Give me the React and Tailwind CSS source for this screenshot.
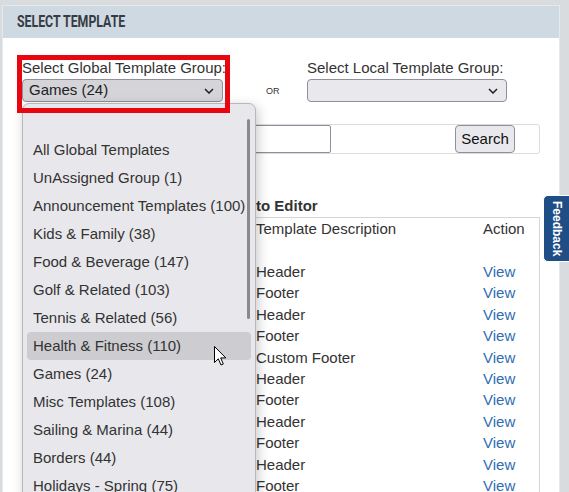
import React from "react";

const items = [
  "",
  "All Global Templates",
  "UnAssigned Group (1)",
  "Announcement Templates (100)",
  "Kids & Family (38)",
  "Food & Beverage (147)",
  "Golf & Related (103)",
  "Tennis & Related (56)",
  "Health & Fitness (110)",
  "Games (24)",
  "Misc Templates (108)",
  "Sailing & Marina (44)",
  "Borders (44)",
  "Holidays - Spring (75)",
];

const rows = [
  "Header",
  "Footer",
  "Header",
  "Footer",
  "Custom Footer",
  "Header",
  "Footer",
  "Header",
  "Footer",
  "Header",
  "Footer",
];

function Chevron() {
  return (
    <svg width="10" height="6" viewBox="0 0 10 6" className="shrink-0">
      <path d="M1 1 L5 5 L9 1" fill="none" stroke="#1f1f1f" strokeWidth="1.5" />
    </svg>
  );
}

export default function App() {
  return (
    <div className="relative w-[569px] h-[492px] overflow-hidden bg-[#d9dcdf] font-['Liberation_Sans',Arial,sans-serif] text-[15px] text-[#333]">
      <div className="ml-[2px] mt-[5px] w-[558px] h-[487px] bg-white border border-b-0 border-[#e6e9ec]">
        <div className="h-[32px] bg-[#cfd9e2] pl-[14px] flex items-center">
          <span className="inline-block font-['Roboto',sans-serif] font-bold text-[16px] leading-none text-[#363c44] scale-x-[0.77] origin-left whitespace-nowrap">
            SELECT TEMPLATE
          </span>
        </div>
        <div className="px-[19px] pt-[21px]">
          <div className="flex items-start">
            <div className="w-[201px]">
              <div className="leading-[17px] whitespace-nowrap">Select Global Template Group:</div>
              <div className="mt-[3px] h-[23px] rounded-[4px] border border-[#8f8f9d] bg-[#d4d4d9] flex items-center justify-between pl-[6px] pr-[8px] text-[#222]">
                <span>Games (24)</span>
                <Chevron />
              </div>
            </div>
            <div className="w-[84px] pl-[43px] pt-[27px] text-[9px] leading-[10px]">OR</div>
            <div className="w-[200px]">
              <div className="leading-[17px] whitespace-nowrap">Select Local Template Group:</div>
              <div className="mt-[3px] h-[23px] rounded-[4px] border border-[#8f8f9d] bg-[#e9e9ed] flex items-center justify-end pr-[8px]">
                <Chevron />
              </div>
            </div>
          </div>

          <div className="mt-[22px] h-[30px] border border-[#dcdcdc] rounded-[3px] flex items-center">
            <div className="w-[308px] h-[28px] border border-[#8f8f9d] rounded-[2px] bg-white" />
            <div className="ml-auto mr-[24px] w-[60px] h-[28px] rounded-[4px] border border-[#8f8f9d] bg-[#e9e9ed] flex items-center justify-center text-[#111]">
              Search
            </div>
          </div>

          <div className="mt-[43px] flex font-bold leading-[17px]">
            <span className="w-[234px] shrink-0" />
            <span>to Editor</span>
          </div>

          <div className="mt-[3px] border-t border-l border-r border-[#d6d6d6]">
            <div className="grid grid-cols-[233px_227px_1fr] h-[43px] pt-[2px] leading-[17px]">
              <div />
              <div>Template Description</div>
              <div>Action</div>
            </div>
            {rows.map((r, i) => (
              <div key={i} className="grid grid-cols-[233px_227px_1fr] h-[21.4px] leading-[21.4px]">
                <div />
                <div>{r}</div>
                <div className="text-[#2f6db3]">View</div>
              </div>
            ))}
          </div>
        </div>
      </div>

      {/* dropdown list */}
      <div className="absolute left-[22px] top-[103px] w-[234px] h-[400px] bg-[#e8e8ec] border border-[#b8b8bc] rounded-t-[7px] shadow-[2px_3px_12px_rgba(0,0,0,0.22)] pt-[4px]">
        {items.map((it, i) => (
          <div
            key={i}
            className={
              "mx-[4px] h-[28px] leading-[28px] pl-[6px] rounded-[4px] whitespace-nowrap text-[#333] " +
              (i === 8 ? "bg-[#cdcdd1]" : "")
            }
          >
            {it}
          </div>
        ))}
        <div className="absolute left-[224px] top-[15px] w-[2.5px] h-[200px] rounded-full bg-[#8a8a8a]" />
      </div>

      {/* red annotation */}
      <div className="absolute left-[17px] top-[55px] w-[213px] h-[58px] border-[5px] border-[#e8070e]" />

      {/* feedback tab */}
      <div className="absolute left-[543px] top-[195px] w-[32px] h-[67px] bg-[#1f4e86] border-[1.5px] border-white rounded-l-[5px] flex items-start pl-[6px] pt-[5px]">
        <span className="[writing-mode:vertical-rl] text-white font-bold text-[12px] leading-[13px]">Feedback</span>
      </div>

      {/* mouse cursor */}
      <svg className="absolute left-[214px] top-[346px]" width="13" height="20" viewBox="0 0 13 20">
        <path
          d="M0.5 0.5 L0.5 16.5 L4.3 12.8 L7 19 L9.3 18 L6.7 11.9 L11.8 11.9 Z"
          fill="#fff"
          stroke="#000"
          strokeWidth="1"
          strokeLinejoin="round"
        />
      </svg>
    </div>
  );
}
